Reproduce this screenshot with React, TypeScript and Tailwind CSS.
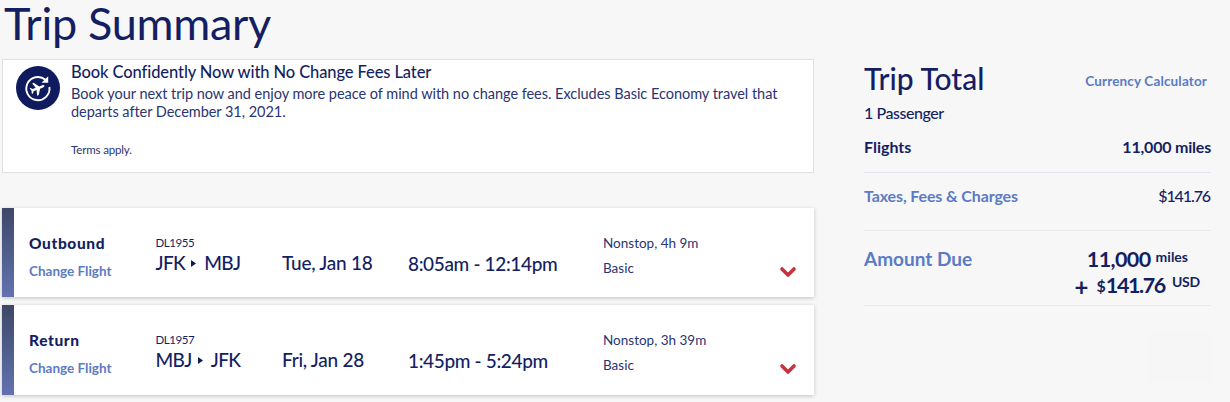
import { ChevronDown } from "lucide-react";

const flights = [
  {
    direction: "Outbound",
    number: "DL1955",
    from: "JFK",
    to: "MBJ",
    date: "Tue, Jan 18",
    time: "8:05am - 12:14pm",
    duration: "Nonstop, 4h 9m",
    cabin: "Basic",
  },
  {
    direction: "Return",
    number: "DL1957",
    from: "MBJ",
    to: "JFK",
    date: "Fri, Jan 28",
    time: "1:45pm - 5:24pm",
    duration: "Nonstop, 3h 39m",
    cabin: "Basic",
  },
];

const PlaneBadge = () => (
  <svg className="mt-1.5 size-11 shrink-0" viewBox="0 0 44 44" fill="none">
    <circle cx="22" cy="22" r="22" fill="#0f1a5f" />
    <path d="M29.5 13.8A11.6 11.6 0 1 0 33.4 21" stroke="white" strokeWidth="1.9" />
    <path d="M25.5 16.8h6.7V10.3z" fill="white" />
    <g transform="translate(21.7 22.3) rotate(68)">
      <path
        d="M0-7.2c.8 0 1.2.9 1.2 1.9v3.2L6.6 1.6v1.7L1.2 1.7v3.2L3 6.3v1.2L0 6.7l-3 .8V6.3l1.8-1.4V1.7l-5.4 1.6V1.6l5.4-3.7v-3.2c0-1 .4-1.9 1.2-1.9z"
        fill="white"
      />
    </g>
  </svg>
);

const FlightCard = ({ flight }: { flight: (typeof flights)[number] }) => (
  <article className="flex h-[89.4px] bg-white shadow-[0_1px_4px_rgba(0,0,0,0.22)]">
    <div className="w-[11.5px] bg-linear-to-b from-[#3d4868] to-[#6373b0]" />
    <div className="ml-[15.5px] w-[126.5px] pt-[25px]">
      <h3 className="text-[15.5px] leading-5 font-black tracking-[0.6px]">{flight.direction}</h3>
      <a className="mt-2 block text-[13.5px] leading-5 font-bold text-[#5b7bc4]">Change Flight</a>
    </div>
    <div className="w-[126.5px] pt-[29px]">
      <p className="text-[11.5px] leading-3 tracking-[-0.45px]">{flight.number}</p>
      <p className="mt-1 flex items-center text-[19px] leading-5 font-medium tracking-[-0.6px]">
        {flight.from}
        <svg className="mr-2 ml-1.5 h-[7px] w-[5px]" viewBox="0 0 5 7">
          <path d="M0 0l5 3.5L0 7z" fill="#0f1a4f" />
        </svg>
        {flight.to}
      </p>
    </div>
    <p className="w-[126px] pt-[45px] text-[19px] leading-5 font-medium tracking-[-0.25px]">{flight.date}</p>
    <p className="w-[195px] pt-[46px] text-[19px] leading-5 font-medium tracking-[-0.35px]">{flight.time}</p>
    <div className="flex-1 pt-[25px] text-[13.5px] leading-5 text-[#2a3472]">
      <p>{flight.duration}</p>
      <p className="mt-[5px]">{flight.cabin}</p>
    </div>
    <ChevronDown className="mt-[52px] mr-[14px] size-6 text-[#c8323f]" strokeWidth={3.6} />
  </article>
);

const TripTotal = () => (
  <aside className="ml-[50px] w-[347px] pt-[60px]">
    <div className="flex items-center justify-between pr-1">
      <h2 className="text-[30px] leading-9 font-medium">Trip Total</h2>
      <a className="mt-1.5 text-[13.5px] leading-5 font-bold tracking-[0.15px] text-[#5b7bc4]">Currency Calculator</a>
    </div>
    <p className="mt-[7px] text-base leading-5 font-medium tracking-[-0.45px]">1 Passenger</p>
    <div className="mt-3.5 flex justify-between border-b border-[#e2e5ef] pb-[15px] text-base leading-5 font-bold">
      <span>Flights</span>
      <span className="tracking-[-0.2px]">11,000 miles</span>
    </div>
    <div className="flex justify-between border-b border-[#e8eaee] pt-[13px] pb-6 text-base leading-5">
      <a className="font-bold tracking-[-0.12px] text-[#5b7bc4]">Taxes, Fees &amp; Charges</a>
      <span className="mr-px font-medium tracking-[-1.1px]">$141.76</span>
    </div>
    <div className="flex h-[75px] justify-between border-b border-[#e8eaee] pt-[15px]">
      <span className="text-[19px] leading-[26px] font-bold text-[#5b7bc4]">Amount Due</span>
      <div className="pr-[11px] font-bold">
        <p className="flex justify-end pr-3 text-[21.5px] leading-[26px] tracking-[-0.6px]">
          11,000<span className="ml-[5px] text-sm leading-[22px] tracking-normal">miles</span>
        </p>
        <p className="flex justify-end text-[21.5px] leading-[26px]">
          <span className="mr-2 pt-0.5 text-[24px]">+</span>
          <span className="pt-px text-[16px]">$</span>
          <span className="tracking-[-1.4px]">141.76</span>
          <span className="ml-[7px] text-sm leading-[19px] tracking-[-0.2px]">USD</span>
        </p>
      </div>
    </div>
    <div className="mt-[27px] ml-auto h-12 w-[62px] bg-[#f6f6f6]" />
  </aside>
);

export default function App() {
  return (
    <main className="flex h-[402px] w-[1230px] overflow-hidden bg-[#f7f7f7] pl-0.5 font-['Lato',sans-serif] text-[#141f63]">
      <section className="w-[812px]">
        <h1 className="ml-0.5 pb-[13px] text-[45px] leading-[46px] tracking-[-0.3px]">Trip Summary</h1>
        <div className="flex h-[114px] border border-[#e0e1e5] bg-white pl-[12.5px]">
          <PlaneBadge />
          <div className="ml-[11.5px] whitespace-nowrap">
            <h2 className="pt-0.5 text-[16.5px] leading-5 font-medium tracking-[-0.1px]">
              Book Confidently Now with No Change Fees Later
            </h2>
            <p className="mt-[3px] text-[14.5px] leading-[18px] tracking-[-0.03px] text-[#2a3472]">
              Book your next trip now and enjoy more peace of mind with no change fees. Excludes Basic Economy travel that
              <br />
              departs after December 31, 2021.
            </p>
            <p className="mt-[22px] text-[11.5px] leading-[14px] tracking-[-0.15px] text-[#2a3472]">Terms apply.</p>
          </div>
        </div>
        <div className="mt-[35px] flex flex-col gap-2">
          {flights.map((flight) => (
            <FlightCard key={flight.number} flight={flight} />
          ))}
        </div>
      </section>
      <TripTotal />
    </main>
  );
}
